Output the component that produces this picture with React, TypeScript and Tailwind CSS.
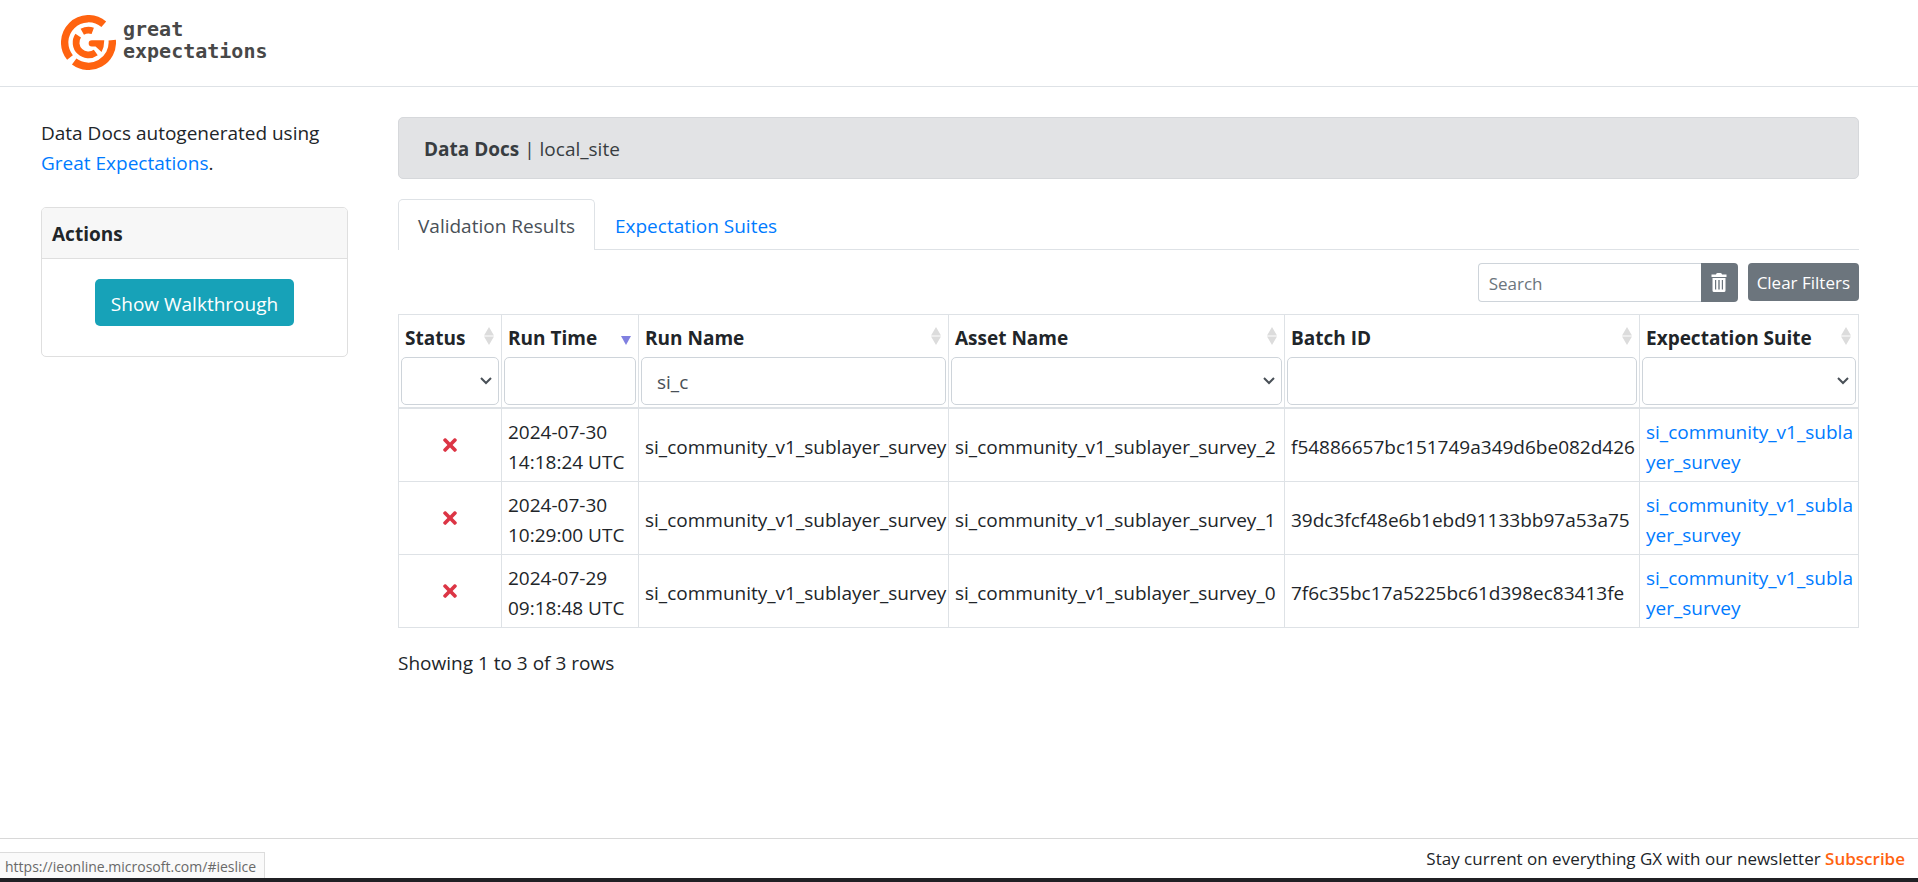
import { useState } from 'react'
import { FaTimes } from 'react-icons/fa'
import clsx from 'clsx'

type FilterKind = 'input' | 'select'

interface Column {
  label: string
  width: string
  filter: FilterKind
  sorted?: boolean
  value?: string
}

interface ValidationRun {
  date: string
  time: string
  runName: string
  asset: string
  batchId: string
  suite: string
}

const COLUMNS: Column[] = [
  { label: 'Status', width: 'w-[103px]', filter: 'select' },
  { label: 'Run Time', width: 'w-[137px]', filter: 'input', sorted: true },
  { label: 'Run Name', width: 'w-[310px]', filter: 'input', value: 'si_c' },
  { label: 'Asset Name', width: 'w-[336px]', filter: 'select' },
  { label: 'Batch ID', width: 'w-[355px]', filter: 'input' },
  { label: 'Expectation Suite', width: 'w-auto', filter: 'select' },
]

const RUNS: ValidationRun[] = [
  {
    date: '2024-07-30',
    time: '14:18:24 UTC',
    runName: 'si_community_v1_sublayer_survey',
    asset: 'si_community_v1_sublayer_survey_2',
    batchId: 'f54886657bc151749a349d6be082d426',
    suite: 'si_community_v1_sublayer_survey',
  },
  {
    date: '2024-07-30',
    time: '10:29:00 UTC',
    runName: 'si_community_v1_sublayer_survey',
    asset: 'si_community_v1_sublayer_survey_1',
    batchId: '39dc3fcf48e6b1ebd91133bb97a53a75',
    suite: 'si_community_v1_sublayer_survey',
  },
  {
    date: '2024-07-29',
    time: '09:18:48 UTC',
    runName: 'si_community_v1_sublayer_survey',
    asset: 'si_community_v1_sublayer_survey_0',
    batchId: '7f6c35bc17a5225bc61d398ec83413fe',
    suite: 'si_community_v1_sublayer_survey',
  },
]

const CELL = 'border border-[#dee2e6] pt-2 pr-0.5 pb-1 pl-1.5'

function LogoMark() {
  return (
    <svg viewBox="0 0 164 164" className="size-[55px]" fill="none" stroke="#ff6310" aria-hidden="true">
      <path d="M127.6 27.6A71 71 0 0 0 26.8 126.7" strokeWidth="22" />
      <path d="M39.3 138.7A71 71 0 0 0 152.7 75" strokeWidth="22" />
      <path d="M63.5 50A37 37 0 0 1 94.7 47.2" strokeWidth="20" />
      <path d="M51.3 61.3A37 37 0 0 0 103.7 112" strokeWidth="20" />
      <path
        d="M92 75H129Q129 95 121 110L103 94H92A9.500 9.500 0 0 1 92 75Z"
        fill="#ff6310"
        stroke="none"
      />
    </svg>
  )
}

function TrashIcon() {
  return (
    <svg viewBox="0 0 16 19" className="h-[19px] w-4" fill="currentColor" aria-hidden="true">
      <path d="M5 1.500Q5 0 6.500 0h3Q11 0 11 1.500h4.500V4H.5V1.500z" />
      <path
        fillRule="evenodd"
        d="M1.500 5h13v12.500q0 1.500-1.500 1.500H3q-1.500 0-1.500-1.500zM4 7v9.500h1.200V7zm3.300 0v9.500h1.400V7zm3.500 0v9.500H12V7z"
      />
    </svg>
  )
}

function SortIcon({ sorted }: { sorted?: boolean }) {
  return (
    <svg viewBox="0 0 10 18" className="h-[18px] w-[10px] shrink-0" aria-hidden="true">
      {sorted ? (
        <path d="M0 9h10L5 18z" fill="#8080e0" />
      ) : (
        <path d="M5 0l5 8.500H0zM0 9.500h10L5 18z" fill="#dcdcdc" />
      )}
    </svg>
  )
}

function ColumnFilter({ column }: { column: Column }) {
  const [value, setValue] = useState(column.value ?? '')
  const box = 'block h-12 w-full rounded-[5px] border border-[#ced4da] bg-white px-[15px] pt-0.5 text-[#495057]'

  if (column.filter === 'input') {
    return (
      <input
        type="text"
        aria-label={column.label}
        value={value}
        onChange={(e) => setValue(e.target.value)}
        className={box}
      />
    )
  }

  return (
    <div className="relative">
      <select
        aria-label={column.label}
        value={value}
        onChange={(e) => setValue(e.target.value)}
        className={clsx(box, 'appearance-none')}
      >
        <option value=""></option>
      </select>
      <svg
        viewBox="0 0 12 8"
        className="pointer-events-none absolute top-5 right-[7px] h-2 w-3"
        fill="none"
        stroke="#495057"
        strokeWidth="2"
        aria-hidden="true"
      >
        <path d="M1 1l5 5 5-5" />
      </svg>
    </div>
  )
}

function Sidebar() {
  return (
    <aside className="w-[307px] shrink-0 pt-px">
      <p>
        Data Docs autogenerated using{' '}
        <a href="#" className="text-[#007bff]">Great Expectations</a>.
      </p>
      <section className="mt-[29px] rounded-[5px] border border-[#dfdfdf]">
        <h2 className="rounded-t-[4px] border-b border-[#dfdfdf] bg-[#f7f7f7] px-2.5 pt-[11px] pb-[9px] font-bold">
          Actions
        </h2>
        <div className="flex justify-center px-5 pt-5 pb-[30px]">
          <button type="button" className="h-[47px] rounded-[5px] bg-[#17a2b8] px-4 pt-0.5 text-white">
            Show Walkthrough
          </button>
        </div>
      </section>
    </aside>
  )
}

function RunsTable() {
  return (
    <table className="mt-3 w-full table-fixed border-collapse border border-[#dee2e6]">
      <thead>
        <tr>
          {COLUMNS.map((column) => (
            <th
              key={column.label}
              className={clsx(
                'border border-b-2 border-[#dee2e6] px-0.5 pt-2 pb-0.5 text-left font-bold',
                column.width,
              )}
            >
              <div className="mb-1 flex items-start justify-between px-1 whitespace-nowrap">
                {column.label}
                <span className="pt-1 pr-px">
                  <SortIcon sorted={column.sorted} />
                </span>
              </div>
              <div className="font-normal">
                <ColumnFilter column={column} />
              </div>
            </th>
          ))}
        </tr>
      </thead>
      <tbody>
        {RUNS.map((run) => (
          <tr key={run.batchId}>
            <td className="border border-[#dee2e6] p-1.5">
              <FaTimes className="mx-auto size-5 text-[#dc3545]" aria-label="Failed" />
            </td>
            <td className={CELL}>
              {run.date}
              <br />
              {run.time}
            </td>
            <td className={CELL}>{run.runName}</td>
            <td className={CELL}>{run.asset}</td>
            <td className={CELL}>{run.batchId}</td>
            <td className={CELL}>
              <a href="#" className="break-all text-[#007bff]">{run.suite}</a>
            </td>
          </tr>
        ))}
      </tbody>
    </table>
  )
}

export default function App() {
  return (
    <div className="relative flex min-h-screen flex-col bg-white font-['Open_Sans','Noto_Sans',sans-serif] text-[19px] leading-[30px] text-[#212529]">
      <header className="border-b border-[#dee2e6] pt-[15px] pb-4 pl-[61px]">
        <a href="#" className="flex w-fit items-start gap-[7px]">
          <LogoMark />
          <span className="pt-[3px] font-['DejaVu_Sans_Mono',monospace] text-xl leading-[22px] font-bold text-[#484848]">
            great
            <br />
            expectations
          </span>
        </a>
      </header>

      <div className="flex flex-1 gap-[50px] pt-[30px] pr-[59px] pl-[41px]">
        <Sidebar />

        <main className="min-w-0 flex-1">
          <div className="rounded-[5px] border border-[#d6d8db] bg-[#e2e3e5] px-[25px] pt-4 pb-3.5 text-[#383d41]">
            <strong>Data Docs</strong> | local_site
          </div>

          <nav className="mt-5 flex border-b border-[#dee2e6]">
            <button
              type="button"
              className="-mb-px h-[51px] rounded-t-[5px] border border-b-0 border-[#dee2e6] bg-white px-[19px] pt-0.5 text-[#495057]"
            >
              Validation Results
            </button>
            <button type="button" className="h-[50px] px-5 pt-[3px] text-[#007bff]">
              Expectation Suites
            </button>
          </nav>

          <div className="mt-[13px] flex items-start justify-end gap-2.5 text-[17px] leading-[26px]">
            <div className="flex">
              <input
                type="search"
                aria-label="Search"
                placeholder="Search"
                className="h-[39px] w-[223px] rounded-l-[4px] border border-r-0 border-[#ced4da] px-2.5 pt-0.5 placeholder:text-[#6c757d]"
              />
              <button
                type="button"
                aria-label="Clear search"
                className="flex h-[39px] w-[37px] items-center justify-center rounded-r-[4px] bg-[#6c757d] text-white"
              >
                <TrashIcon />
              </button>
            </div>
            <button type="button" className="h-[38px] rounded-[4px] bg-[#6c757d] px-[9px] pt-px text-white">
              Clear Filters
            </button>
          </div>

          <RunsTable />

          <p className="mt-5">Showing 1 to 3 of 3 rows</p>
        </main>
      </div>

      <footer className="border-t border-[#d8d8d8] pt-[7px] pr-[13px] pb-1.5 text-right text-[17px] leading-[26px]">
        Stay current on everything GX with our newsletter{' '}
        <a href="#" className="font-semibold text-[#ff6310]">Subscribe</a>
      </footer>
      <div className="h-1 bg-[#202024]" />

      {/* Link preview bubble */}
      <div className="absolute bottom-1 left-0 h-[26px] border-t border-r border-[#dcdcdc] bg-[#fafafa] pr-2 pl-[5px] text-sm leading-7 text-[#696969]">
        https://ieonline.microsoft.com/#ieslice
      </div>
    </div>
  )
}
